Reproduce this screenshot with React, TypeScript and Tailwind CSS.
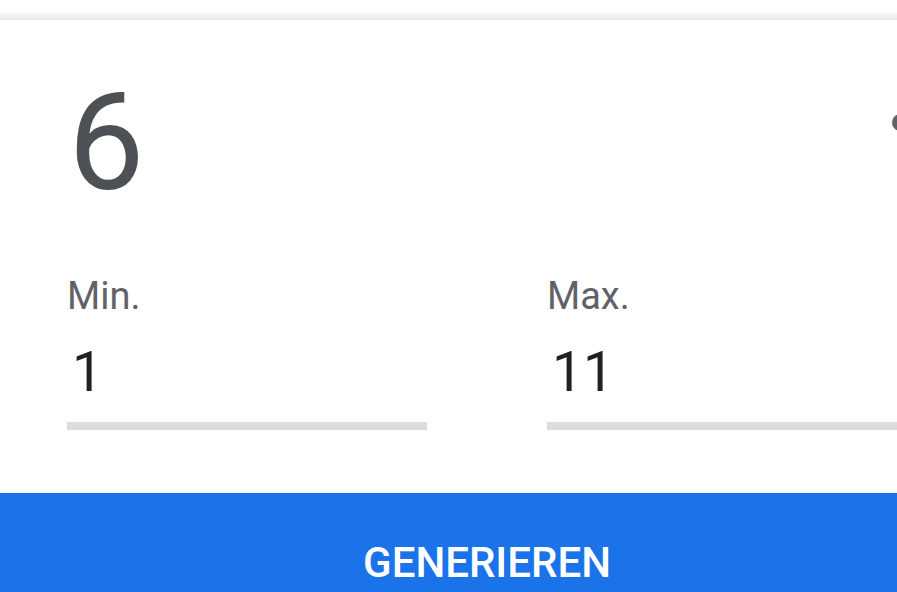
export default function App() {
  return (
    <div className="relative h-[592px] w-[897px] overflow-hidden bg-white font-['Roboto',sans-serif]">
      <div className="h-[13px]" />
      <div className="h-[7px] bg-gradient-to-b from-[#f5f6f7] to-[#e8eaed]" />

      <div className="w-[974px]">
        <div className="px-[67px]">
          {/* result */}
          <div className="mt-[55px] flex items-start justify-between">
            <span className="block h-[136px] pl-[1px] text-[136px] leading-none text-[#4d5156]">6</span>
            <span className="mt-[39px] mr-[-2px] block h-[17px] w-[17px] rounded-full bg-[#5f6368]" />
          </div>

          {/* range inputs */}
          <div className="mt-[66px] grid grid-cols-2 gap-[120px]">
            <div>
              <div className="text-[38px] leading-none text-[#5f6368]">Min.</div>
              <div className="mt-[30px] pl-[5px] text-[55px] leading-none text-[#202124]">1</div>
              <div className="mt-[22px] h-[8px] bg-[#dadce0]" />
            </div>
            <div>
              <div className="text-[38px] leading-none text-[#5f6368]">Max.</div>
              <div className="mt-[30px] pl-[5px] text-[55px] leading-none text-[#202124]">11</div>
              <div className="mt-[22px] h-[8px] bg-[#dadce0]" />
            </div>
          </div>
        </div>

        <div className="mt-[63px] h-[120px] w-full bg-[#1a73e8] pt-[49px] text-center">
          <span className="block text-[42px] font-medium leading-none text-white">GENERIEREN</span>
        </div>
      </div>
    </div>
  );
}
